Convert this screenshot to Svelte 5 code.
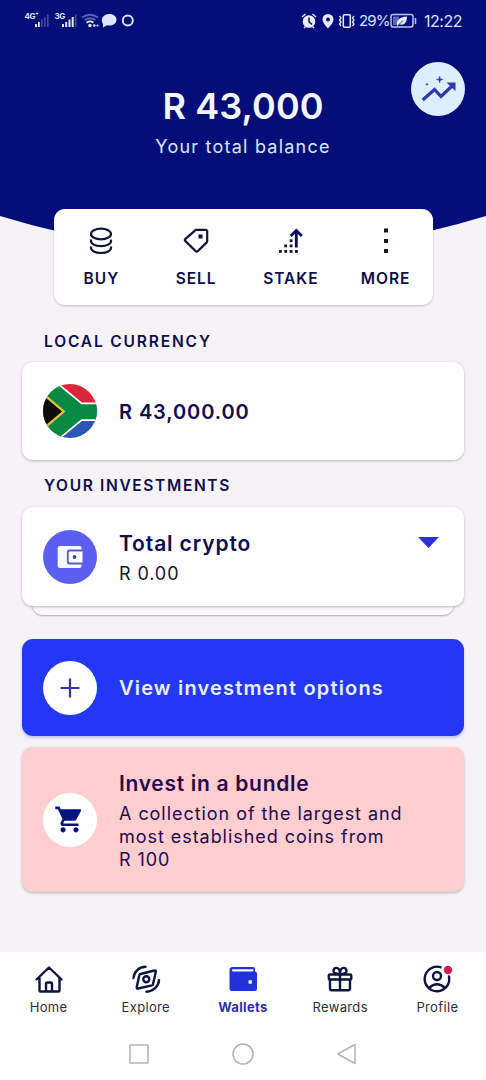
<script lang="ts">
	interface NavItem {
		id: string;
		label: string;
	}

	const actions: NavItem[] = [
		{ id: 'buy', label: 'BUY' },
		{ id: 'sell', label: 'SELL' },
		{ id: 'stake', label: 'STAKE' },
		{ id: 'more', label: 'MORE' }
	];

	const tabs: NavItem[] = [
		{ id: 'home', label: 'Home' },
		{ id: 'explore', label: 'Explore' },
		{ id: 'wallets', label: 'Wallets' },
		{ id: 'rewards', label: 'Rewards' },
		{ id: 'profile', label: 'Profile' }
	];

	const stakeDots: number[][] = [
		[1, 23], [6.3, 23], [11.7, 23], [17, 23], [6.3, 17.5], [11.7, 17.5], [11.7, 12.3]
	];

	let activeTab: string = $state('wallets');
</script>

<div class="screen">
	<header class="hero">
		<svg class="hero-bg" viewBox="0 0 486 260" aria-hidden="true">
			<path d="M0 0H486V216Q243 290 0 216Z" fill="#040e79" />
		</svg>

		<div class="status">
			<svg class="status-left" width="112" height="20" viewBox="0 0 112 20" fill="#dfe5ff">
				<text class="net" x="0.5" y="9">4G⁺</text>
				<path d="M11 14h2v3h-2zM14 12h1.800v5H14z" />
				<path d="M17 9h1.600v8H17zM20 7h1.600v10H20zM23 4.500h1.600V17H23z" opacity=".28" />
				<text class="net" x="30.500" y="9">3G</text>
				<path d="M38 14h2v3h-2zM41.200 12h2v5h-2zM44.500 9.500h2V17h-2zM47.700 7h2v10h-2z" />
				<path d="M51 4.500h1.600V17H51z" opacity=".28" />
				<g fill="none" stroke="#dfe5ff" stroke-width="1.800">
					<path d="M58 7.500q8-5.500 16 0M60.500 10q5.500-3.500 11 0" opacity=".4" />
					<path d="M62.500 12.700q3.500-2.500 7 0" />
				</g>
				<circle cx="66" cy="15.500" r="1.700" />
				<circle cx="70.300" cy="15.500" r="1.300" />
				<circle cx="73.500" cy="15.500" r="1.100" />
				<path d="M85.500 4c4 0 7 2.500 7 5.800s-3 5.800-7 5.800c-1 0-1.800-.1-2.500-.3L79 17.500v-3.700C78 12.700 77.900 11.500 77.900 9.800 77.900 6.500 81.500 4 85.500 4z" />
				<circle cx="103.800" cy="10.500" r="5" fill="none" stroke="#dfe5ff" stroke-width="1.900" />
			</svg>

			<div class="status-right">
				<svg width="57" height="18" viewBox="0 0 57 18" fill="#e6ebff">
					<circle cx="7" cy="9.500" r="6.300" />
					<path d="M7 5.500V10l3 2.300" fill="none" stroke="#040e79" stroke-width="1.500" />
					<path d="M0 5L3.500 2M10.500 2L14 5M2 16l1.500-1.500M12 16l-1.500-1.500" stroke="#e6ebff" stroke-width="1.400" />
					<path fill-rule="evenodd" d="M26 2a5.500 5.500 0 0 1 5.500 5.500C31.500 11 26 16.500 26 16.500S20.500 11 20.500 7.500A5.500 5.500 0 0 1 26 2zm0 3.500a2 2 0 1 0 0 4 2 2 0 0 0 0-4z" />
					<g fill="none" stroke="#e6ebff">
						<rect x="41.300" y="2.800" width="7" height="12.400" rx="1.200" stroke-width="1.500" />
						<path d="M37.500 4l1.500 2-1.500 2 1.500 2-1.500 2 1.500 2M52 4l-1.500 2L52 8l-1.500 2L52 12l-1.500 2" stroke-width="1.300" />
					</g>
				</svg>
				<span class="percent">29%</span>
				<svg class="battery" width="28" height="16" viewBox="0 0 28 16">
					<rect x="1" y="1.500" width="22" height="12.500" rx="2.200" fill="none" stroke="#b9c3f5" stroke-width="1.500" />
					<rect x="3" y="3.500" width="6" height="8.500" fill="#5965b5" />
					<path d="M7 12.500C6 7 10 4 17 3.500c0 6-3 9.500-8 7.800L7.500 13z" fill="#e6ebff" />
					<path d="M8.500 12L13 7.500" stroke="#26339a" />
					<path d="M25.500 5v6" stroke="#b9c3f5" stroke-width="1.500" />
				</svg>
				<span class="clock">12:22</span>
			</div>
		</div>

		<div class="balance">
			<h1>R 43,000</h1>
			<p>Your total balance</p>
		</div>

		<button type="button" class="trend" aria-label="Insights">
			<svg width="54" height="54" viewBox="0 0 54 54">
				<path d="M11.700 38L23.500 27.500L30 34.500L41 24" fill="none" stroke="#3038ae" stroke-width="3.200" />
				<path d="M35.500 20.500H44.500V29z" fill="#3038ae" />
				<path d="M28.700 14l.8 2.700 2.700.8-2.700.8-.8 2.700-.8-2.700-2.700-.8 2.700-.8z" fill="#3038ae" stroke="#3038ae" stroke-width=".4" />
				<path d="M16 20.500l.5 1.200 1.200.5-1.200.5-.5 1.200-.5-1.200-1.200-.5 1.200-.5z" fill="#3038ae" />
			</svg>
		</button>
	</header>

	<div class="actions">
		{#each actions as action (action.id)}
			<button type="button" class="action">
				<svg width="26" height="28" viewBox="0 0 26 28" fill="none" stroke="#101437" stroke-width="2.200">
					{#if action.id === 'buy'}
						<ellipse cx="13" cy="7" rx="10" ry="5.400" />
						<path d="M3 12.500v1.500c0 2.800 4 5.200 10 5.200s10-2.400 10-5.200v-1.500M3 19.500v1.300C3 23.500 7 26 13 26s10-2.500 10-5.200v-1.300" />
					{:else if action.id === 'sell'}
						<path d="M13.300 2.800H22.700a1.500 1.500 0 0 1 1.500 1.500V14.300a1.500 1.500 0 0 1-.5 1.100L14.700 24.200a1.300 1.300 0 0 1-1.900 0L2.200 13.900a1.300 1.300 0 0 1 0-1.800L12.200 3.300z" stroke-linejoin="round" />
						<path d="M15.500 7.500h4v4h-4z" fill="#101437" stroke="none" />
					{:else if action.id === 'stake'}
						{#each stakeDots as [x, y]}
							<rect {x} {y} width="2.800" height="2.800" fill="#101437" stroke="none" />
						{/each}
						<path d="M18.300 20.500V3.500M12.800 9L18.300 3.500L23.800 9" stroke="#0a0c55" stroke-width="2.800" />
					{:else}
						<path d="M11 1.500h4v4h-4zM11 12h4v4h-4zM11 22h4v4h-4z" fill="#17181f" stroke="none" />
					{/if}
				</svg>
				<span>{action.label}</span>
			</button>
		{/each}
	</div>

	<main>
		<h2>LOCAL CURRENCY</h2>
		<section class="card card--local">
			<svg class="badge" viewBox="0 0 54 54" aria-label="South Africa">
				<defs>
					<clipPath id="flag-clip"><circle cx="27" cy="27" r="27" /></clipPath>
				</defs>
				<g clip-path="url(#flag-clip)">
					<path d="M0 0H54V27H0z" fill="#d9283d" />
					<path d="M0 27H54V54H0z" fill="#2857b4" />
					<path d="M-10-20.700L38.700 19.300H60V36.200H38.700L-10 76z" fill="#098a43" stroke="#fff" stroke-width="1.700" />
					<path d="M-6 3L22.500 27.500L-6 52z" fill="#e3bd45" />
					<path d="M-6 6.500L19 27.500L-6 48.500z" fill="#0b0c08" />
				</g>
			</svg>
			<strong class="amount">R 43,000.00</strong>
		</section>

		<h2 class="second">YOUR INVESTMENTS</h2>
		<div class="stack">
			<section class="card card--crypto">
				<span class="badge badge--violet">
					<svg width="54" height="54" viewBox="0 0 54 54">
						<path d="M17 16H36.500a2 2 0 0 1 2 2V36a2 2 0 0 1-2 2H17a2.300 2.300 0 0 1-2.300-2.300V18.300A2.300 2.300 0 0 1 17 16z" fill="#f7f7ff" />
						<path d="M39.500 20.500H26.500a1.700 1.700 0 0 0-1.700 1.700V31.800a1.700 1.700 0 0 0 1.700 1.700H39.500" fill="#fff" stroke="#5658ca" stroke-width="1.800" />
						<circle cx="31.500" cy="27" r="1.900" fill="#454796" />
					</svg>
				</span>
				<div class="text">
					<strong class="title">Total crypto</strong>
					<span class="value">R 0.00</span>
				</div>
				<svg class="caret" width="21" height="11" viewBox="0 0 21 11"><path d="M0 0H21L10.500 11z" fill="#2733d2" /></svg>
			</section>
			<div class="sheet"></div>
		</div>

		<button type="button" class="card card--options">
			<span class="badge badge--white">
				<svg width="20" height="20" viewBox="0 0 20 20"><path d="M10 .5v19M.5 10h19" stroke="#3037a5" stroke-width="2.200" /></svg>
			</span>
			<strong class="options">View investment options</strong>
		</button>

		<section class="card card--bundle">
			<span class="badge badge--white">
				<svg class="cart" width="31" height="31" viewBox="0 0 24 24" fill="#06137c">
					<path d="M7 18c-1.100 0-1.990.9-1.990 2S5.900 22 7 22s2-.9 2-2-.9-2-2-2zM1 2v2h2l3.600 7.590-1.350 2.450c-.16.280-.25.610-.25.960 0 1.100.9 2 2 2h12v-2H7.420c-.14 0-.25-.11-.25-.25l.03-.12.900-1.630h7.450c.75 0 1.410-.41 1.750-1.030l3.580-6.490A1 1 0 0 0 20 4H5.210l-.94-2H1zm16 16c-1.100 0-1.990.9-1.990 2s.89 2 1.990 2 2-.9 2-2-.9-2-2-2z" />
				</svg>
			</span>
			<div class="text">
				<strong class="title bundle-title">Invest in a bundle</strong>
				<p>
					A collection of the largest and<br />
					most established coins from<br />
					R 100
				</p>
			</div>
		</section>
	</main>

	<nav class="tabs">
		{#each tabs as tab (tab.id)}
			<button
				type="button"
				class="tab"
				class:tab--active={activeTab === tab.id}
				onclick={() => (activeTab = tab.id)}
			>
				<svg width="30" height="30" viewBox="0 0 30 30" fill="none" stroke="#0c1440" stroke-width="2.400" stroke-linecap="round" stroke-linejoin="round">
					{#if tab.id === 'home'}
						<path d="M2.500 15.500L15 3.500L27.500 15.500M5.500 13.500V26.500a1 1 0 0 0 1 1H12V20a1.500 1.500 0 0 1 1.500-1.500h3A1.500 1.500 0 0 1 18 20v7.500h6.500a1 1 0 0 0 1-1V13.500M12 27.500h6" />
					{:else if tab.id === 'explore'}
						<path d="M9.500 10L23.500 6.500a1 1 0 0 1 1.300 1.300L22 20.300a1.500 1.500 0 0 1-1 1L7 24.500a1 1 0 0 1-1.300-1.300L8.300 11.200a1.500 1.500 0 0 1 1.200-1.200z" />
						<circle cx="15.300" cy="15.300" r="3" />
						<path d="M2.500 14C3 7.500 8 3 14.500 2.800M28 16.200c-.5 6.300-5.500 11-12.500 11.500" />
					{:else if tab.id === 'wallets'}
						<path d="M4.500 3H25a2 2 0 0 1 2 2v2.500a2 2 0 0 1 2 2V25a2 2 0 0 1-2 2H4a2.500 2.500 0 0 1-2.500-2.500V6a3 3 0 0 1 3-3z" fill="#2230e0" stroke="none" />
						<path d="M5 6.300H24.500" stroke="#fff" stroke-width="2.200" />
						<rect x="20.500" y="16.300" width="3.400" height="3.400" rx=".8" fill="#fff" stroke="none" />
					{:else if tab.id === 'rewards'}
						<rect x="3.800" y="10.500" width="22.500" height="5" rx="1" />
						<path d="M5 16V24.500a1.700 1.700 0 0 0 1.700 1.700H23.300A1.700 1.700 0 0 0 25 24.500V16M15 10.500V26M15 10C9.500 10 8.500 8.500 8.500 6.700 8.500 3 14 2.500 15 8 16 2.500 21.500 3 21.500 6.700 21.500 8.500 20.500 10 15 10z" />
					{:else}
						<path d="M18.500 3.200A12.300 12.300 0 1 0 27 12.500" />
						<circle cx="15" cy="12" r="4" />
						<path d="M7 24q8-7.500 16 0" />
						<circle cx="26" cy="6" r="4.200" fill="#d51c4e" stroke="none" />
					{/if}
				</svg>
				<span>{tab.label}</span>
			</button>
		{/each}
	</nav>

	<footer class="system">
		<svg width="20" height="20" viewBox="0 0 20 20"><rect x="1" y="1" width="18" height="18" rx=".5" /></svg>
		<svg width="22" height="22" viewBox="0 0 22 22"><circle cx="11" cy="11" r="10" /></svg>
		<svg width="20" height="22" viewBox="0 0 20 22"><path d="M18 1.500V20.500L.8 11z" stroke-linejoin="round" /></svg>
	</footer>
</div>

<style>
	:global(body) {
		background: #f6f3f7;
	}

	* {
		box-sizing: border-box;
	}

	.screen {
		width: 486px;
		height: 1080px;
		display: flex;
		flex-direction: column;
		overflow: hidden;
		background: #f6f3f7;
		color: #0d0d52;
		font-family: Inter, "Liberation Sans", sans-serif;
		font-feature-settings: "calt" 0;
	}

	svg {
		display: block;
		flex-shrink: 0;
		overflow: visible;
	}

	button {
		border: 0;
		padding: 0;
		background: none;
		color: inherit;
		font: inherit;
		text-align: left;
	}

	h1, h2, p {
		margin: 0;
	}

	.hero {
		position: relative;
		height: 209px;
		flex-shrink: 0;
	}

	.hero-bg {
		position: absolute;
		top: 0;
		left: 0;
		width: 486px;
		height: 260px;
	}

	.status {
		position: relative;
		display: flex;
		justify-content: space-between;
		height: 40px;
		padding: 10px 24px 0;
	}

	.net {
		font-size: 8px;
		font-weight: 700;
		letter-spacing: -0.4px;
	}

	.status-right {
		display: flex;
		align-items: center;
		height: 21px;
		color: #dce2ff;
		font-size: 16px;
	}

	.percent {
		width: 29px;
		font-size: 15px;
		letter-spacing: -0.8px;
	}

	.battery {
		margin-left: 2px;
	}

	.clock {
		margin-left: 6px;
		width: 38px;
		white-space: nowrap;
		letter-spacing: -0.5px;
	}

	.balance {
		position: relative;
		padding-top: 44px;
		text-align: center;
		color: #f3f6ff;
	}

	.balance h1 {
		font-size: 36px;
		line-height: 44px;
		font-weight: 600;
		letter-spacing: 0.1px;
	}

	.balance p {
		margin-top: 7px;
		font-size: 18px;
		line-height: 24px;
		letter-spacing: 1.22px;
		color: #dce4ff;
	}

	.trend {
		position: absolute;
		top: 62px;
		right: 21px;
		width: 54px;
		height: 54px;
		border-radius: 50%;
		background: #dceeff;
	}

	.actions {
		position: relative;
		display: grid;
		grid-template-columns: repeat(4, 1fr);
		width: 379px;
		height: 96px;
		margin: 0 auto;
		flex-shrink: 0;
		border-radius: 11px;
		background: #fff;
		box-shadow: 0 1px 2px rgb(40 30 60 / 0.25);
	}

	.action {
		display: flex;
		flex-direction: column;
		align-items: center;
		padding: 18px 0 0 1px;
		font-size: 15.5px;
		line-height: 20px;
		font-weight: 600;
		letter-spacing: 0.95px;
	}

	.action span {
		margin-top: 14px;
	}

	main {
		flex: 1;
		padding: 0 22px;
	}

	h2 {
		padding: 27px 22px 0;
		font-size: 15.5px;
		line-height: 20px;
		font-weight: 600;
		letter-spacing: 1.85px;
	}

	h2.second {
		padding-top: 16px;
		letter-spacing: 1.65px;
	}

	.card {
		display: flex;
		align-items: center;
		width: 442px;
		padding: 0 21px;
		border-radius: 11px;
		background: #fff;
		box-shadow: 0 1px 3px rgb(40 30 60 / 0.3);
	}

	.card--local {
		height: 98px;
		margin-top: 10px;
	}

	.card--crypto {
		position: relative;
		height: 99px;
	}

	.stack {
		margin-top: 11px;
	}

	/* second card peeking out below the first */
	.sheet {
		height: 20px;
		margin: -11px 10px 0;
		border-radius: 0 0 11px 11px;
		background: #faf9fb;
		box-shadow: 0 1px 2px rgb(40 30 60 / 0.35);
	}

	.badge {
		display: grid;
		place-items: center;
		width: 54px;
		height: 54px;
		margin-right: 22px;
		flex-shrink: 0;
		border-radius: 50%;
	}

	.badge--violet {
		background: #5a5ff0;
	}

	.badge--white {
		background: #fff;
	}

	.amount {
		padding-top: 1px;
		font-size: 20px;
		font-weight: 600;
		letter-spacing: 0.9px;
	}

	.text {
		display: flex;
		flex-direction: column;
		flex: 1;
		padding-top: 3px;
	}

	.title {
		font-size: 21px;
		line-height: 26px;
		font-weight: 600;
		letter-spacing: 0.87px;
	}

	.bundle-title {
		letter-spacing: 0.7px;
	}

	.value {
		margin-top: 5px;
		font-size: 18px;
		line-height: 24px;
		letter-spacing: 0.9px;
		color: #171632;
	}

	.caret {
		align-self: flex-start;
		margin: 30px 4px 0 0;
	}

	.card--options {
		height: 97px;
		margin-top: 24px;
		background: #2337f6;
		color: #e8efff;
		box-shadow: 0 2px 3px rgb(80 110 230 / 0.35);
	}

	.options {
		padding-top: 1px;
		font-size: 20px;
		font-weight: 600;
		letter-spacing: 1.17px;
		white-space: nowrap;
	}

	.card--bundle {
		height: 145px;
		margin-top: 11px;
		background: #ffcecf;
		color: #25084f;
	}

	.cart {
		margin-right: 2px;
	}

	.card--bundle p {
		margin-top: 5px;
		font-size: 18px;
		line-height: 23px;
		letter-spacing: 0.95px;
		white-space: nowrap;
	}

	.tabs {
		display: grid;
		grid-template-columns: repeat(5, 1fr);
		height: 78px;
		flex-shrink: 0;
		background: #fff;
	}

	.tab {
		display: flex;
		flex-direction: column;
		align-items: center;
		padding-top: 12px;
		font-size: 13px;
		line-height: 18px;
		letter-spacing: 0.35px;
		color: #2b2d43;
	}

	.tab span {
		margin-top: 4px;
	}

	.tab--active {
		color: #2b2fae;
		font-weight: 700;
	}

	.system {
		display: flex;
		justify-content: center;
		align-items: center;
		gap: 83px;
		height: 50px;
		padding-bottom: 2px;
		flex-shrink: 0;
		background: #fff;
	}

	.system svg {
		fill: none;
		stroke: #b9b5ba;
		stroke-width: 1.6;
	}
</style>
